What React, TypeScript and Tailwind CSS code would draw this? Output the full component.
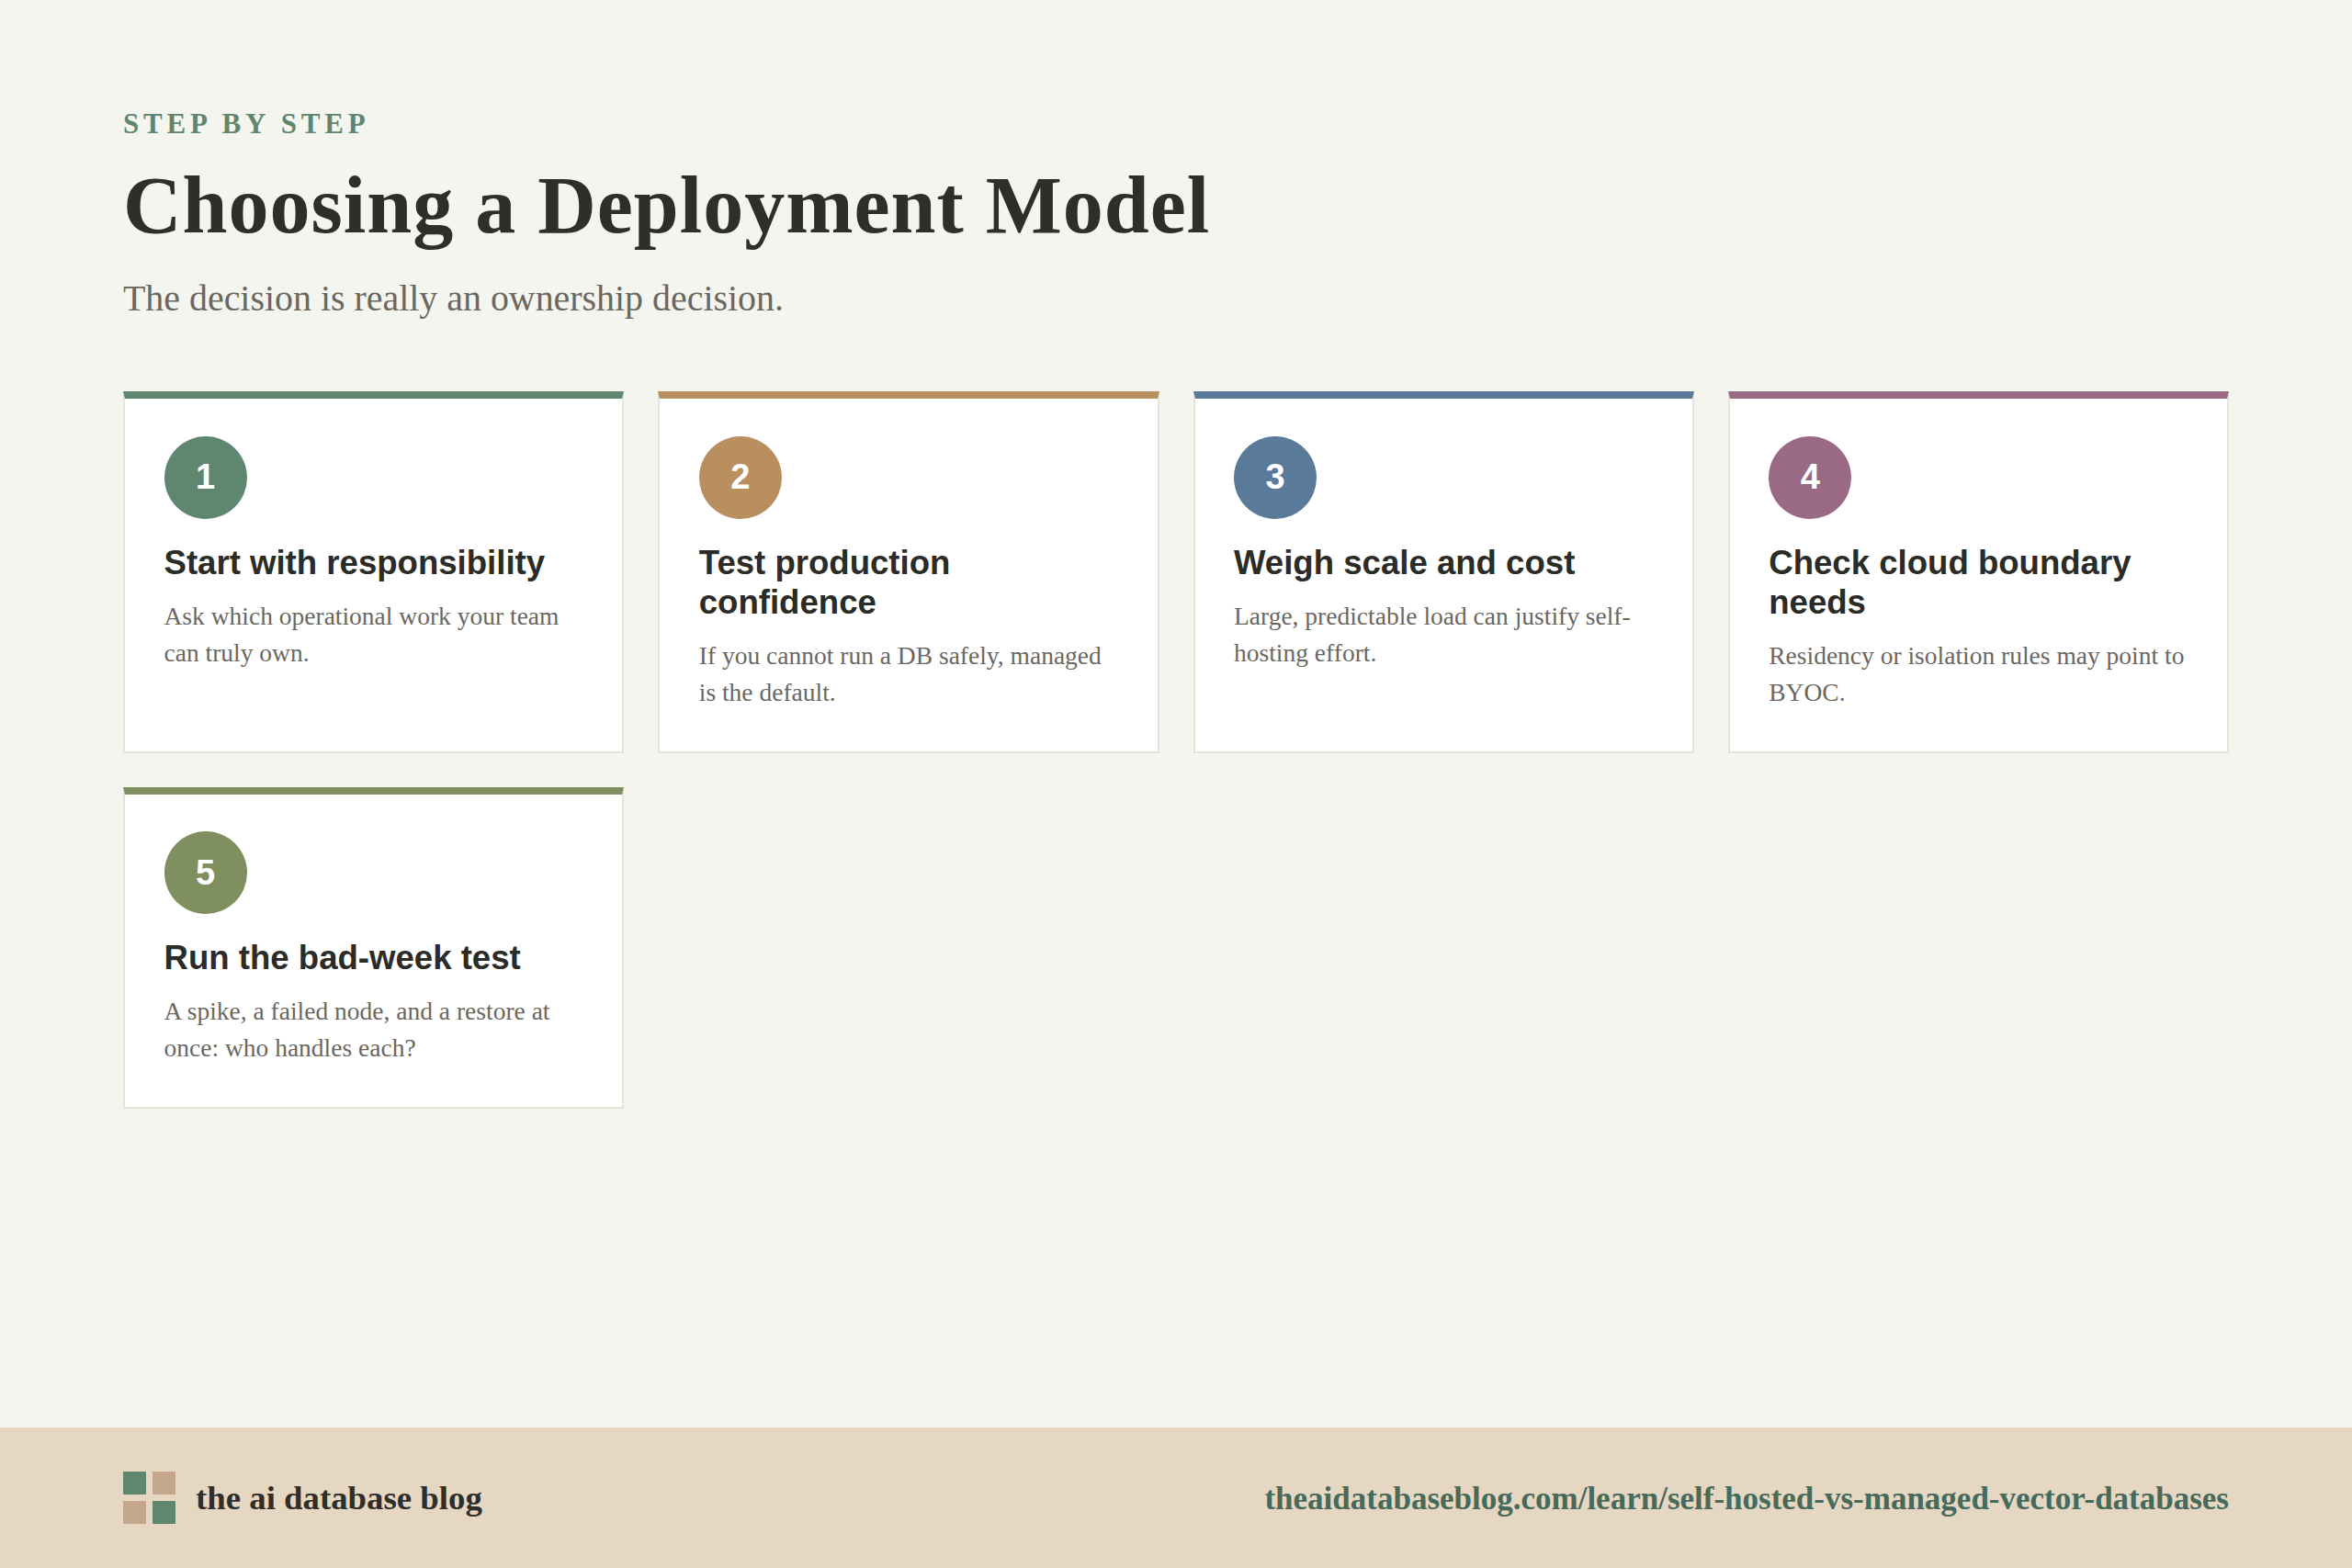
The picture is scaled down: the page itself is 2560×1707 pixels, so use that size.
const steps = [
  {
    n: 1,
    title: 'Start with responsibility',
    body: 'Ask which operational work your team can truly own.',
    top: 'border-t-[#5f8770]',
    bg: 'bg-[#5f8770]',
  },
  {
    n: 2,
    title: 'Test production confidence',
    body: 'If you cannot run a DB safely, managed is the default.',
    top: 'border-t-[#b98f5f]',
    bg: 'bg-[#b98f5f]',
  },
  {
    n: 3,
    title: 'Weigh scale and cost',
    body: 'Large, predictable load can justify self-hosting effort.',
    top: 'border-t-[#5a7a9a]',
    bg: 'bg-[#5a7a9a]',
  },
  {
    n: 4,
    title: 'Check cloud boundary needs',
    body: 'Residency or isolation rules may point to BYOC.',
    top: 'border-t-[#9a6a85]',
    bg: 'bg-[#9a6a85]',
  },
  {
    n: 5,
    title: 'Run the bad-week test',
    body: 'A spike, a failed node, and a restore at once: who handles each?',
    top: 'border-t-[#7f8f5f]',
    bg: 'bg-[#7f8f5f]',
  },
];

export default function App() {
  return (
    <div className="flex h-[1707px] w-[2560px] flex-col bg-[#f4f5ef] font-['Liberation_Serif',serif]">
      <main className="flex-1 px-[134px] pt-[115px]">
        <p className="text-[31px] leading-[40px] font-bold tracking-[4.8px] text-[#5f8770]">STEP BY STEP</p>
        <h1 className="mt-[15px] text-[88px] leading-[108px] font-bold tracking-[1px] text-[#2e2f2a]">
          Choosing a Deployment Model
        </h1>
        <p className="mt-[22px] text-[39.9px] leading-[50px] text-[#6b675f]">The decision is really an ownership decision.</p>

        <div className="mt-[76px] grid grid-cols-4 gap-[37px]">
          {steps.map((s) => (
            <div key={s.n} className={`border-2 border-t-[8px] border-[#e6e3da] bg-white pt-[40.5px] pr-[42px] pb-[44px] pl-[42.5px] ${s.top}`}>
              <div className={`flex h-[90px] w-[90px] items-center justify-center rounded-full text-[38px] font-bold text-white font-['Liberation_Sans',sans-serif] ${s.bg}`}>
                {s.n}
              </div>
              <h3 className="mt-[26px] text-[36.6px] leading-[43px] font-bold text-[#2b2b27] font-['Liberation_Sans',sans-serif]">
                {s.title}
              </h3>
              <p className="mt-[17px] text-[27.5px] leading-[40px] text-[#6b675f]">{s.body}</p>
            </div>
          ))}
        </div>
      </main>

      <footer className="flex h-[153px] items-center justify-between bg-[#e6d7c3] px-[134px]">
        <div className="flex items-center gap-[22px]">
          <div className="grid grid-cols-2 gap-[7px]">
            <span className="h-[25px] w-[25px] bg-[#5f8770]" />
            <span className="h-[25px] w-[25px] bg-[#c4a78c]" />
            <span className="h-[25px] w-[25px] bg-[#c4a78c]" />
            <span className="h-[25px] w-[25px] bg-[#5f8770]" />
          </div>
          <span className="text-[36.8px] font-bold text-[#2e2f2a]">the ai database blog</span>
        </div>
        <span className="pt-[3px] text-[35px] font-bold text-[#466a5b]">theaidatabaseblog.com/learn/self-hosted-vs-managed-vector-databases</span>
      </footer>
    </div>
  );
}
